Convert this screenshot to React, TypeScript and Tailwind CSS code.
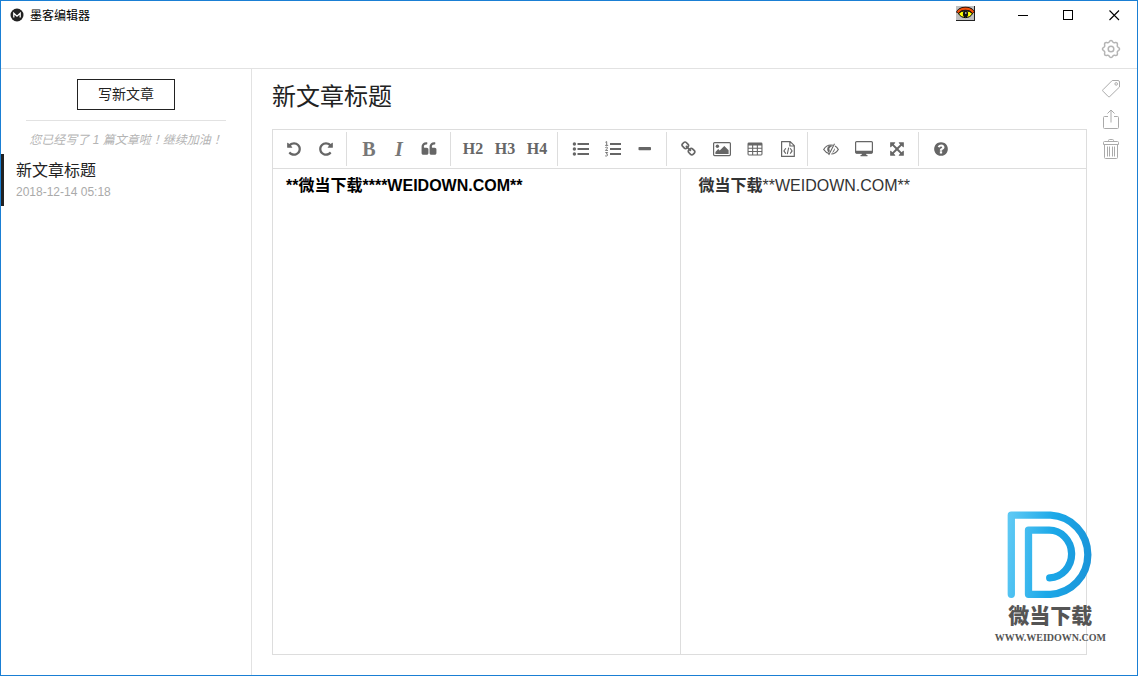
import { useState } from "react";
import type { ReactNode } from "react";

const UNDO =
  "M1664 896q0 156-61 298t-164 245-245 164-298 61q-172 0-327-72.5t-264-204.5q-7-10-6.5-22.5t8.5-20.5l137-138q10-9 25-9 16 2 23 12 73 95 179 147t225 52q104 0 198.5-40.5t163.5-109.5 109.5-163.5 40.5-198.5-40.5-198.5-109.5-163.5-163.5-109.5-198.5-40.5q-98 0-188 35.5t-160 101.5l137 138q31 30 14 69-17 40-59 40h-448q-26 0-45-19t-19-45v-448q0-42 40-59 39-17 69 14l130 129q107-101 244.5-156.5t284.5-55.5q156 0 298 61t245 164 164 245 61 298z";
const REDO =
  "M1664 256v448q0 26-19 45t-45 19h-448q-42 0-59-40-17-39 14-69l138-138q-148-137-349-137-104 0-198.5 40.5t-163.5 109.5-109.5 163.5-40.5 198.5 40.5 198.5 109.5 163.5 163.5 109.5 198.5 40.5q119 0 225-52t179-147q7-10 23-12 15 0 25 9l137 138q9 8 9.5 20.5t-7.5 22.5q-109 132-264 204.5t-327 72.5q-156 0-298-61t-245-164-164-245-61-298 61-298 164-245 245-164 298-61q147 0 284.5 55.5t244.5 156.5l130-129q29-31 70-14 39 17 39 59z";
const QUOTE =
  "M832 960v384q0 80-56 136t-136 56h-384q-80 0-136-56t-56-136v-704q0-104 40.5-198.5t109.5-163.5 163.5-109.5 198.5-40.5h64q26 0 45 19t19 45v128q0 26-19 45t-45 19h-64q-106 0-181 75t-75 181v32q0 40 28 68t68 28h224q80 0 136 56t56 136zm896 0v384q0 80-56 136t-136 56h-384q-80 0-136-56t-56-136v-704q0-104 40.5-198.5t109.5-163.5 163.5-109.5 198.5-40.5h64q26 0 45 19t19 45v128q0 26-19 45t-45 19h-64q-106 0-181 75t-75 181v32q0 40 28 68t68 28h224q80 0 136 56t56 136z";
const LINK =
  "M1456 1216q0-40-28-68l-208-208q-28-28-68-28-42 0-72 32 3 3 19 18.5t21.5 21.5 15 19 13 25.5 3.5 27.5q0 40-28 68t-68 28q-15 0-27.5-3.5t-25.5-13-19-15-21.5-21.5-18.5-19q-33 31-33 73 0 40 28 68l206 207q27 27 68 27 40 0 68-26l147-146q28-28 28-67zm-703-705q0-40-28-68l-206-207q-28-28-68-28-39 0-68 27l-147 146q-28 28-28 67 0 40 28 68l208 208q27 27 68 27 42 0 72-31-3-3-19-18.5t-21.5-21.5-15-19-13-25.5-3.5-27.5q0-40 28-68t68-28q15 0 27.5 3.5t25.5 13 19 15 21.5 21.5 18.5 19q33-31 33-73zm895 705q0 120-85 203l-147 146q-83 83-203 83-121 0-204-85l-206-207q-83-83-83-203 0-123 88-209l-88-88q-86 88-208 88-120 0-204-84l-208-208q-84-84-84-204t85-203l147-146q83-83 203-83 121 0 204 85l206 207q83 83 83 203 0 123-88 209l88 88q86-88 208-88 120 0 204 84l208 208q84 84 84 204z";
const EXPAND =
  "M1411 541l-355 355 355 355 144-144q29-31 70-14 39 17 39 59v448q0 26-19 45t-45 19h-448q-42 0-59-40-17-39 14-69l144-144-355-355-355 355 144 144q31 30 14 69-17 40-59 40h-448q-26 0-45-19t-19-45v-448q0-42 40-59 39-17 69 14l144 144 355-355-355-355-144 144q-19 19-45 19-12 0-24-5-40-17-40-59v-448q0-26 19-45t45-19h448q42 0 59 40 17 39-14 69l-144 144 355 355 355-355-144-144q-31-30-14-69 17-40 59-40h448q26 0 45 19t19 45v448q0 42-39 59-13 5-25 5-26 0-45-19z";
const HELP =
  "M1024 1376v-192q0-14-9-23t-23-9h-192q-14 0-23 9t-9 23v192q0 14 9 23t23 9h192q14 0 23-9t9-23zm256-672q0-88-55.5-163t-138.5-116-170-41q-243 0-371 213-15 24 8 42l132 100q7 6 19 6 16 0 25-12 53-68 86-92 34-24 86-24 48 0 85.5 26t37.5 59q0 38-20 61t-68 45q-63 28-115.5 86.5t-52.5 125.5v36q0 14 9 23t23 9h192q14 0 23-9t9-23q0-19 21.5-49.5t54.5-49.5q32-18 49-28.5t46-35 44.5-48 28-60.5 12.5-81zm384 192q0 209-103 385.5t-279.5 279.5-385.5 103-385.5-103-279.5-279.5-103-385.5 103-385.5 279.5-279.5 385.5-103 385.5 103 279.5 279.5 103 385.5z";

function Glyph({ d }: { d: string }) {
  return (
    <svg viewBox="0 0 1792 1792" className="size-4" fill="currentColor" aria-hidden="true">
      <path d={d} />
    </svg>
  );
}

function BulletList() {
  return (
    <svg viewBox="0 0 18 16" className="h-4 w-[18px]" fill="currentColor" aria-hidden="true">
      <circle cx="2.4" cy="3" r="1.7" />
      <circle cx="2.4" cy="8" r="1.7" />
      <circle cx="2.4" cy="13" r="1.7" />
      <path d="M5.5 2H17v2H5.5zM5.5 7H17v2H5.5zM5.5 12H17v2H5.5z" />
    </svg>
  );
}

function NumberList() {
  return (
    <svg viewBox="0 0 18 16" className="h-4 w-[18px]" aria-hidden="true">
      <path fill="currentColor" d="M6 2h11v2H6zM6 7h11v2H6zM6 12h11v2H6z" />
      <path
        fill="none"
        stroke="currentColor"
        strokeWidth="0.9"
        d="M1.4 1.3L2.7.6V4M1.2 4.4H4.2M1.3 6.7C2 5.8 3.7 6 3.5 7.1C3.4 8 1.6 8.6 1.5 9.4H4M1.3 11.5H3.6L2.4 13C4.4 13.1 4 15.6 1.2 14.9"
      />
    </svg>
  );
}

function Minus() {
  return (
    <svg viewBox="0 0 16 16" className="size-4" fill="currentColor" aria-hidden="true">
      <rect x="1.5" y="6" width="12.5" height="3.2" rx="0.8" />
    </svg>
  );
}

function Picture() {
  return (
    <svg viewBox="0 0 18 16" className="h-4 w-[18px]" aria-hidden="true">
      <rect x="0.6" y="1.6" width="16.8" height="13" rx="1" fill="none" stroke="currentColor" strokeWidth="1.2" />
      <circle cx="4.4" cy="5.2" r="1.7" fill="currentColor" />
      <path fill="currentColor" d="M2.4 12.9v-2L5.2 8.1l1.5 1.5L11.3 5l4.3 4.2v3.7z" />
    </svg>
  );
}

function TableGrid() {
  return (
    <svg viewBox="0 0 16 16" className="size-4" aria-hidden="true">
      <path
        fill="currentColor"
        fillRule="evenodd"
        d="M1.9 1.5h12.2a1.4 1.4 0 0 1 1.4 1.4v10.2a1.4 1.4 0 0 1-1.4 1.4H1.9a1.4 1.4 0 0 1-1.4-1.4V2.9A1.4 1.4 0 0 1 1.9 1.5zM1.6 4.500v2.200h3.500V4.500zM6.200 4.500v2.200h3.600V4.500zM10.900 4.500v2.200h3.500V4.500zM1.600 7.800v2.200h3.500V7.800zM6.200 7.800v2.200h3.600V7.800zM10.900 7.800v2.200h3.500V7.800zM1.600 11.100v2.300h3.500v-2.300zM6.200 11.100v2.300h3.600v-2.300zM10.900 11.100v2.300h3.500v-2.300z"
      />
    </svg>
  );
}

function CodeFile() {
  return (
    <svg viewBox="0 0 16 16" className="size-4" fill="none" stroke="currentColor" aria-hidden="true">
      <path strokeWidth="1.2" strokeLinejoin="round" d="M1.6.6H10.2L14.3 4.6V15.4H1.6zM9.9.8V5H14.1" />
      <path strokeWidth="1.1" d="M5.8 7.2L3.9 9.9L5.8 12.6M10.2 7.2L12.1 9.9L10.2 12.6M8.7 6.6L7.3 13.2" />
    </svg>
  );
}

function EyeSlash() {
  return (
    <svg viewBox="0 0 16 16" className="size-4" fill="none" stroke="currentColor" aria-hidden="true">
      <path
        strokeWidth="1.2"
        d="M6.5 12.6C4 12.1 1.9 10.5.7 8.5C2.2 5.8 5 4 8 4C8.7 4 9.4 4.1 10 4.3M12 5.1C13.4 5.9 14.5 7.1 15.3 8.5C13.7 11.2 11 12.9 8.3 13"
      />
      <path strokeWidth="1.1" d="M11.5 2.7L5.7 13.9" />
      <path
        fill="currentColor"
        stroke="none"
        d="M8 4.3C5.7 4.4 4.2 6.2 4.2 8.3C4.2 9.7 4.9 10.9 6 11.6L6.8 10.1L6.3 7.6L7.9 5.7L9.3 5.2zM11.7 7C12.2 9.3 10.9 11.3 9.1 12z"
      />
    </svg>
  );
}

function Desktop() {
  return (
    <svg viewBox="0 0 18 16" className="h-4 w-[18px]" aria-hidden="true">
      <rect x="0.6" y="0.6" width="16.8" height="11.5" rx="1" fill="none" stroke="currentColor" strokeWidth="1.2" />
      <path fill="currentColor" d="M.6 9.7h16.8v1.8q0 1-1 1H1.6q-1 0-1-1zM7 12h4l.4 2h1.1v1.2h-7V14h1.1z" />
    </svg>
  );
}

const toolSizes = {
  sm: "h-[34px] w-[30px]",
  md: "h-[34px] w-8",
  lg: "h-[34px] w-[33px]",
};

function Tool({ label, size = "md", children }: { label: string; size?: keyof typeof toolSizes; children: ReactNode }) {
  return (
    <button
      type="button"
      title={label}
      aria-label={label}
      className={`flex items-center justify-center hover:bg-gray-100 ${toolSizes[size]}`}
    >
      {children}
    </button>
  );
}

function Toolbar() {
  const group = "flex items-center border-r border-[#ddd]";
  return (
    <div
      role="toolbar"
      aria-label="编辑工具"
      className="flex shrink-0 flex-wrap border-b border-[#ddd] py-0.5 text-[#666]"
    >
      <div className={`${group} pr-1 pl-[5px]`}>
        <Tool label="撤销"><Glyph d={UNDO} /></Tool>
        <Tool label="重做"><Glyph d={REDO} /></Tool>
      </div>
      <div className={`${group} pr-1.5 pl-[7px]`}>
        <Tool size="sm" label="粗体">
          <span className="font-['Liberation_Serif',serif] text-xl leading-5 font-bold text-[#777]">B</span>
        </Tool>
        <Tool size="sm" label="斜体">
          <span className="font-['Liberation_Serif',serif] text-xl leading-5 font-bold text-[#777] italic">I</span>
        </Tool>
        <Tool size="sm" label="引用"><Glyph d={QUOTE} /></Tool>
      </div>
      <div className={`${group} pr-1 pl-1.5 font-['Liberation_Serif',serif] text-base font-bold`}>
        <Tool label="二级标题">H2</Tool>
        <Tool label="三级标题">H3</Tool>
        <Tool label="四级标题">H4</Tool>
      </div>
      <div className={`${group} pr-[5px] pl-[7px]`}>
        <Tool label="无序列表"><BulletList /></Tool>
        <Tool label="有序列表"><NumberList /></Tool>
        <Tool label="横线"><Minus /></Tool>
      </div>
      <div className={`${group} pr-[3px] pl-[5px]`}>
        <Tool size="lg" label="链接"><Glyph d={LINK} /></Tool>
        <Tool size="lg" label="图片"><Picture /></Tool>
        <Tool size="lg" label="表格"><TableGrid /></Tool>
        <Tool size="lg" label="代码块"><CodeFile /></Tool>
      </div>
      <div className={`${group} pr-[5px] pl-1.5`}>
        <Tool size="lg" label="关闭实时预览"><EyeSlash /></Tool>
        <Tool size="lg" label="全窗口预览"><Desktop /></Tool>
        <Tool size="lg" label="全屏"><Glyph d={EXPAND} /></Tool>
      </div>
      <div className="flex items-center pl-1.5">
        <Tool label="帮助"><Glyph d={HELP} /></Tool>
      </div>
    </div>
  );
}

function TitleBar() {
  return (
    <header className="flex h-7 shrink-0 items-center text-black">
      <svg viewBox="0 0 14 14" className="ml-[9px] size-3.5" aria-hidden="true">
        <circle cx="7" cy="7" r="6.5" fill="#222" />
        <path d="M3.8 9.6V5.2L7 8.2L10.2 5.2V9.6" fill="none" stroke="#fff" strokeWidth="1.3" />
      </svg>
      <span className="flex-1 pt-0.5 pl-1.5 text-xs">墨客编辑器</span>
      <button type="button" aria-label="护眼" className="mr-6 pb-1">
        <svg viewBox="0 0 19 16" className="h-4 w-[19px]" aria-hidden="true">
          <path fill="#c0c0c0" d="M0 1h19v15H0z" />
          <path fill="#222" d="M18 1h1v15H0v-1h18z" />
          <path fill="#ff0" stroke="#000" strokeWidth="1" d="M2.500 8.500C5.500 5 13.500 5 16.500 8.500C14 14 5 14 2.500 8.500z" />
          <path fill="none" stroke="#000" strokeWidth="3.600" d="M1.500 8C4.500 2.200 14.500 2.200 17.500 8" />
          <path fill="none" stroke="#f0500c" strokeWidth="2.200" d="M1.700 7.600C4.500 2.200 14.500 2.200 17.300 7.600" />
          <ellipse cx="9.500" cy="9" rx="2.600" ry="3.400" fill="#111" />
          <path fill="#999" d="M9 7h1.500v2H9z" />
        </svg>
      </button>
      <button type="button" aria-label="最小化" className="flex h-full w-[46px] items-center justify-center">
        <svg viewBox="0 0 11 11" className="size-[11px]" shapeRendering="crispEdges" aria-hidden="true">
          <path fill="#000" d="M1 5h10v1H1z" />
        </svg>
      </button>
      <button type="button" aria-label="最大化" className="flex h-full w-[46px] items-center justify-center">
        <svg viewBox="0 0 11 11" className="size-[11px]" shapeRendering="crispEdges" aria-hidden="true">
          <path fill="none" stroke="#000" d="M.5.5h9v9h-9z" />
        </svg>
      </button>
      <button type="button" aria-label="关闭" className="flex h-full w-[46px] items-center justify-center">
        <svg viewBox="0 0 11 11" className="size-[11px]" aria-hidden="true">
          <path fill="none" stroke="#000" strokeWidth="1.1" d="M.5.5l9.500 9.500M10 .5l-9.500 9.500" />
        </svg>
      </button>
    </header>
  );
}

// Outline with eight soft lobes, the first one pointing straight up.
const gearOutline = Array.from({ length: 96 }, (_, i) => {
  const angle = (i / 96) * Math.PI * 2;
  const radius = 7.7 + 0.8 * Math.cos(angle * 8);
  const x = 10 + radius * Math.sin(angle);
  const y = 10 - radius * Math.cos(angle);
  return `${i === 0 ? "M" : "L"}${x.toFixed(2)} ${y.toFixed(2)}`;
}).join("");

function Gear() {
  return (
    <svg
      viewBox="0 0 20 20"
      className="size-5"
      fill="none"
      stroke="currentColor"
      strokeWidth="1.5"
      strokeLinejoin="round"
      aria-hidden="true"
    >
      <path d={`${gearOutline}z`} />
      <circle cx="10" cy="10" r="2.800" />
    </svg>
  );
}

function ArticleActions() {
  const icon = "h-5 w-[18px]";
  return (
    <aside className="flex w-[50px] shrink-0 flex-col items-center gap-2.5 pt-2.5 pr-0.5 text-[#aaa]">
      <button type="button" aria-label="标签">
        <svg viewBox="0 0 18 20" className={icon} fill="none" stroke="currentColor" aria-hidden="true">
          <path strokeLinejoin="round" d="M10.200 1.500H16Q17.500 1.500 17.500 3V8L7.800 17.500Q7 18.300 6.200 17.500L1 12.200Q.200 11.500 1 10.700z" />
          <circle cx="14.200" cy="4.900" r="1.300" />
        </svg>
      </button>
      <button type="button" aria-label="分享">
        <svg viewBox="0 0 18 20" className={icon} fill="none" stroke="currentColor" aria-hidden="true">
          <path d="M6 7.500H2.500Q1.500 7.500 1.500 8.500V18.500Q1.500 19.500 2.500 19.500H15.500Q16.500 19.500 16.500 18.500V8.500Q16.500 7.500 15.500 7.500H12M9 13.500V1M5.500 4.500L9 1L12.500 4.500" />
        </svg>
      </button>
      <button type="button" aria-label="删除">
        <svg viewBox="0 0 18 20" className={icon} fill="none" stroke="currentColor" aria-hidden="true">
          <path d="M6.500 2.500V1.500Q6.500.500 7.500.500H10.500Q11.500.500 11.500 1.500V2.500M2.500 2.500H15.500Q16.500 2.500 16.500 3.500V5.500H1.500V3.500Q1.500 2.500 2.500 2.500zM2.500 5.500V18.500Q2.500 19.500 3.500 19.500H14.500Q15.500 19.500 15.500 18.500V5.500M5.500 7.500V17.500M7.500 7.500V17.500M10.500 7.500V17.500M12.500 7.500V17.500" />
        </svg>
      </button>
    </aside>
  );
}

function Brand() {
  return (
    <div className="pointer-events-none absolute right-[31px] bottom-[31px] flex flex-col items-center text-[#555]">
      <svg viewBox="0 0 87 87" className="size-[87px]" fill="none" aria-hidden="true">
        <defs>
          <linearGradient id="brand" gradientUnits="userSpaceOnUse" x1="0" y1="40" x2="87" y2="50">
            <stop offset="0" stopColor="#5cc8f4" />
            <stop offset="0.5" stopColor="#1ba8e8" />
            <stop offset="1" stopColor="#1b93d8" />
          </linearGradient>
        </defs>
        <path
          d="M4.300 83.300V4.200H43.500A39.300 39.600 0 0 1 43.500 83.300H21.500V19.200H41.500A22.500 23.800 0 0 1 42.700 66.800"
          stroke="url(#brand)"
          strokeWidth="7.300"
          strokeLinecap="round"
          strokeLinejoin="round"
        />
      </svg>
      <span className="mt-1.5 text-[21px] leading-6 font-black">微当下载</span>
      <span className="mt-1 font-['Liberation_Serif',serif] text-[10px] leading-3 font-bold">WWW.WEIDOWN.COM</span>
    </div>
  );
}

export default function App() {
  const [title, setTitle] = useState("新文章标题");
  const [body, setBody] = useState("**微当下载****WEIDOWN.COM**");
  return (
    <div className="relative flex h-screen flex-col border border-[#1a7fd4] bg-white font-['Liberation_Sans','Noto_Sans_CJK_SC',sans-serif] text-[#222]">
      <TitleBar />
      <div className="flex h-10 shrink-0 items-center justify-end border-b border-[#e2e2e2] pt-px pr-4 text-[#b4b4b4]">
        <button type="button" aria-label="设置">
          <Gear />
        </button>
      </div>
      <div className="flex min-h-0 flex-1">
        <nav aria-label="文章列表" className="w-[251px] shrink-0 border-r border-[#e2e2e2]">
          <div className="mx-[25px] flex justify-center border-b border-[#e2e2e2] py-2.5">
            <button type="button" className="border border-[#222] px-5 text-sm leading-[29px]">
              写新文章
            </button>
          </div>
          <p className="mt-2.5 text-center font-['Liberation_Sans','Noto_Sans_CJK_TC',sans-serif] text-xs leading-[18px] text-[#b4b4b4] italic">
            您已经写了 1 篇文章啦！继续加油！
          </p>
          <a href="#article" className="mt-[5px] block border-l-[3px] border-[#222] py-[5px] pl-3">
            <span className="block text-base leading-6">新文章标题</span>
            <time className="block text-xs leading-[18px] text-[#aaa]">2018-12-14 05:18</time>
          </a>
        </nav>
        <main className="flex min-w-0 flex-1 flex-col pb-5 pl-5">
          <input
            aria-label="标题"
            value={title}
            onChange={(e) => setTitle(e.target.value)}
            className="h-[60px] w-full shrink-0 pb-2.5 text-2xl outline-none"
          />
          <section className="flex min-h-0 flex-1 flex-col border border-[#ddd]">
            <Toolbar />
            <div className="grid min-h-0 flex-1 grid-cols-2">
              <textarea
                aria-label="正文"
                value={body}
                onChange={(e) => setBody(e.target.value)}
                spellCheck={false}
                className="min-w-0 resize-none px-[13px] py-[5px] text-base leading-6 font-bold text-black outline-none"
              />
              <article className="min-w-0 border-l border-[#ddd] px-[18px] py-[5px] text-base leading-6 text-[#333]">
                <p>
                  <strong>微当下载</strong>**WEIDOWN.COM**
                </p>
              </article>
            </div>
          </section>
        </main>
        <ArticleActions />
      </div>
      <Brand />
    </div>
  );
}
